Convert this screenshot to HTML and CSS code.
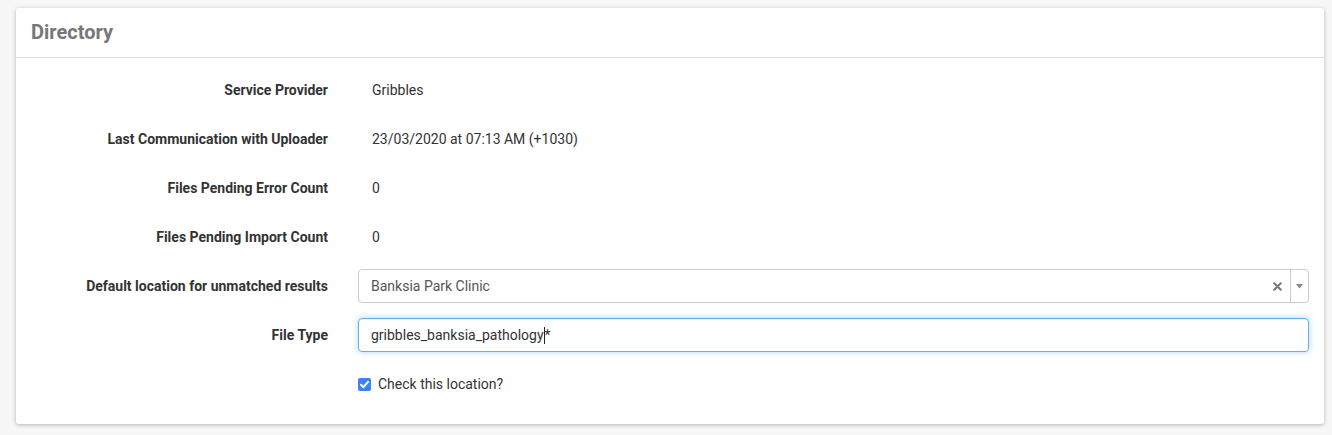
FILE: index.html
```html
<!DOCTYPE html>
<html>
<head>
<meta charset="utf-8">
<link rel="stylesheet" href="styles.css">
</head>
<body>
<div class="page">
  <div class="card">
    <div class="card-head"><h2 class="title">Directory</h2></div>
    <div class="card-body">
      <div class="row">
        <div class="label">Service Provider</div>
        <div class="value"><div class="static">Gribbles</div></div>
      </div>
      <div class="row">
        <div class="label">Last Communication with Uploader</div>
        <div class="value"><div class="static">23/03/2020 at 07:13 AM (+1030)</div></div>
      </div>
      <div class="row">
        <div class="label">Files Pending Error Count</div>
        <div class="value"><div class="static">0</div></div>
      </div>
      <div class="row">
        <div class="label">Files Pending Import Count</div>
        <div class="value"><div class="static">0</div></div>
      </div>
      <div class="row">
        <div class="label">Default location for unmatched results</div>
        <div class="value">
          <div class="select">
            <span class="select-text">Banksia Park Clinic</span>
            <span class="select-clear">
              <svg width="9" height="9" viewBox="0 0 9 9"><path d="M1.2 1.2 L7.8 7.8 M7.8 1.2 L1.2 7.8" stroke="#777" stroke-width="2" stroke-linecap="round"/></svg>
            </span>
            <span class="select-arrow">
              <svg width="7" height="5" viewBox="0 0 7 5"><path d="M0 0 H7 L3.5 4.5 Z" fill="#888"/></svg>
            </span>
          </div>
        </div>
      </div>
      <div class="row">
        <div class="label">File Type</div>
        <div class="value">
          <div class="input focus"><span>gribbles_banksia_pathology</span><span class="caret"></span><span>*</span></div>
        </div>
      </div>
      <div class="row check-row">
        <div class="label"></div>
        <div class="value">
          <label class="check">
            <span class="box">
              <svg width="13" height="13" viewBox="0 0 13 13"><rect width="13" height="13" rx="2" fill="#3b82f6"/><path d="M3 6.8 L5.4 9.2 L10 3.8" fill="none" stroke="#fff" stroke-width="2" stroke-linecap="round" stroke-linejoin="round"/></svg>
            </span>
            <span>Check this location?</span>
          </label>
        </div>
      </div>
    </div>
  </div>
</div>
</body>
</html>
```

FILE: styles.css
```css
html, body {
  margin: 0;
  padding: 0;
  background: #f7f7f7;
  font-family: Roboto, "Liberation Sans", Arial, sans-serif;
  font-size: 14px;
  color: #333;
}
.page {
  padding: 8px 8px 11px 16px;
}
.card {
  width: 1308px;
  background: #fff;
  border-radius: 3px;
  box-shadow: 0 1px 4px rgba(0,0,0,0.28);
}
.card-head {
  height: 49px;
  border-bottom: 1px solid #ddd;
  display: flex;
  align-items: center;
  padding: 0 15px;
}
.title {
  margin: 0;
  font-size: 20px;
  font-weight: 700;
  color: #777;
  position: relative;
  top: -1px;
}
.card-body {
  padding: 15px 15px 15px 0;
}
.row {
  display: grid;
  grid-template-columns: 327px 951px;
  column-gap: 15px;
  height: 34px;
  margin-bottom: 15px;
}
.row:last-child {
  margin-bottom: 8px;
}
.label {
  display: flex;
  align-items: center;
  justify-content: flex-end;
  padding-right: 15px;
  font-weight: 700;
  color: #333;
  text-align: right;
}
.value {
  display: flex;
  align-items: center;
}
.static {
  padding-left: 14px;
  color: #333;
}
.select, .input {
  box-sizing: border-box;
  width: 951px;
  height: 34px;
  border: 1px solid #ccc;
  border-radius: 4px;
  display: flex;
  align-items: center;
  color: #555;
}
.select-text {
  flex: 1;
  padding-left: 12px;
}
.select-clear {
  width: 17px;
  display: flex;
  justify-content: center;
  padding-right: 4px;
}
.select-arrow {
  width: 17px;
  height: 32px;
  border-left: 1px solid #ccc;
  display: flex;
  align-items: center;
  justify-content: center;
}
.input {
  padding-left: 12px;
}
.input.focus {
  border-color: #66afe9;
  box-shadow: inset 0 1px 1px rgba(0,0,0,.075), 0 0 6px rgba(102,175,233,.5);
  color: #333;
}
.caret {
  display: inline-block;
  width: 1px;
  height: 17px;
  background: #222;
  margin-left: 0;
}
.check {
  display: flex;
  align-items: center;
  gap: 7px;
  color: #333;
}
.box {
  display: flex;
}
```
